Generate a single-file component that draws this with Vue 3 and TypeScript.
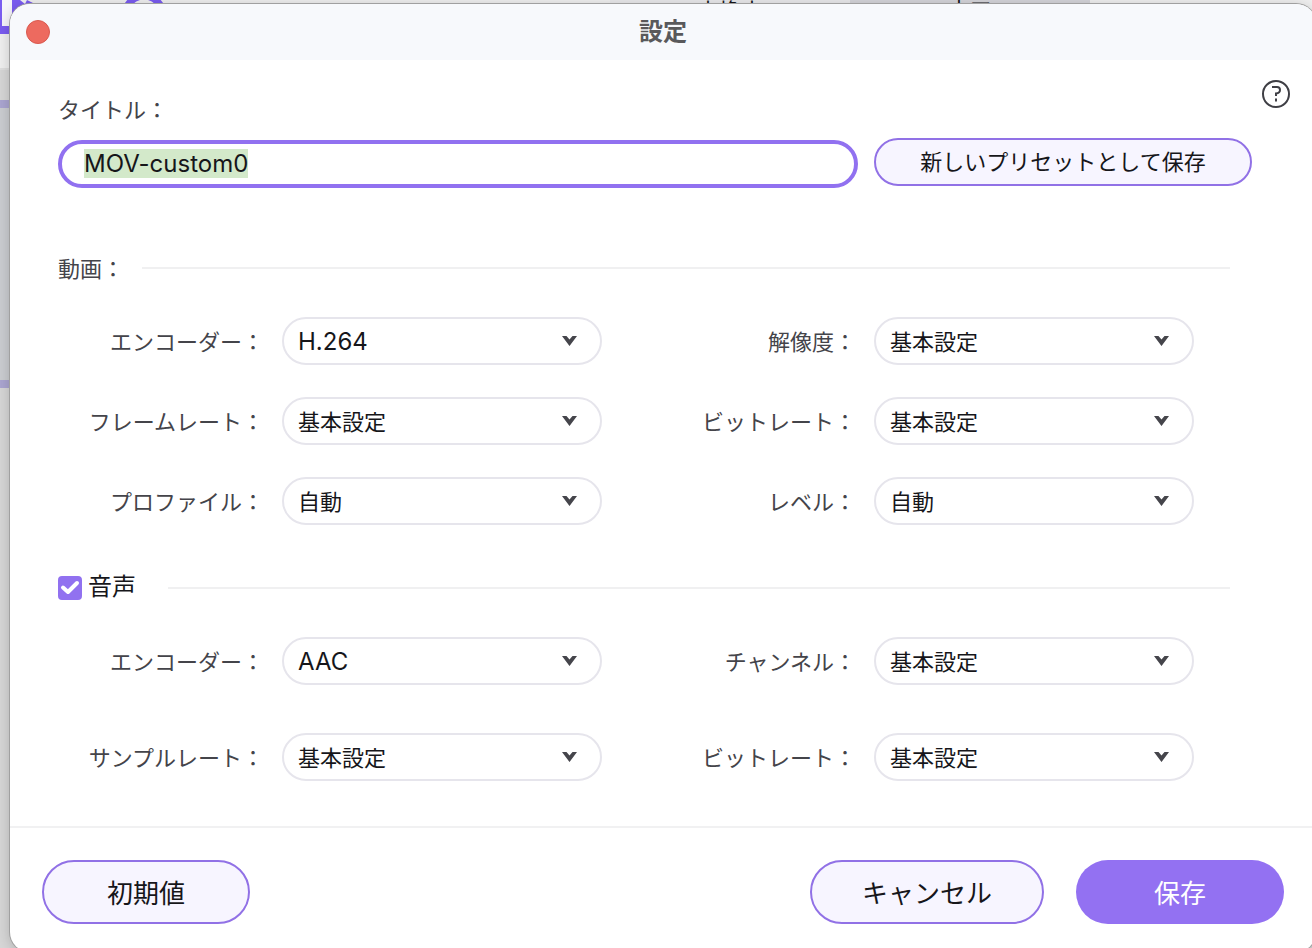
<script setup lang="ts">
import { onMounted, reactive, ref } from 'vue'

interface Field {
  id: string
  label: string
  options: string[]
  latin?: boolean
}

const presetName = ref('MOV-custom0')
const audioEnabled = ref(true)
const nameInput = ref<HTMLInputElement | null>(null)

const videoFields: Field[] = [
  { id: 'video-encoder', label: 'エンコーダー：', options: ['H.264'], latin: true },
  { id: 'video-resolution', label: '解像度：', options: ['基本設定'] },
  { id: 'video-framerate', label: 'フレームレート：', options: ['基本設定'] },
  { id: 'video-bitrate', label: 'ビットレート：', options: ['基本設定'] },
  { id: 'video-profile', label: 'プロファイル：', options: ['自動'] },
  { id: 'video-level', label: 'レベル：', options: ['自動'] },
]

const audioFields: Field[] = [
  { id: 'audio-encoder', label: 'エンコーダー：', options: ['AAC'], latin: true },
  { id: 'audio-channel', label: 'チャンネル：', options: ['基本設定'] },
  { id: 'audio-samplerate', label: 'サンプルレート：', options: ['基本設定'] },
  { id: 'audio-bitrate', label: 'ビットレート：', options: ['基本設定'] },
]

const values = reactive<Record<string, string>>({})
for (const field of [...videoFields, ...audioFields]) {
  values[field.id] = field.options[0]
}

onMounted(() => {
  nameInput.value?.focus()
  nameInput.value?.select()
})
</script>

<template>
  <div class="desktop">
    <div class="backdrop" aria-hidden="true">
      <svg class="brand" width="180" height="36" viewBox="0 0 180 36">
        <path d="M2 0H12V26H2Z" fill="#f6f5fa" />
        <path d="M0 0H2V26H12V34H0Z" fill="#7a5cf0" />
        <path d="M12 0H27L37 5V14H12Z" fill="#7a5cf0" />
        <path d="M20 0L25 4L27 0Z" fill="#efeff4" />
        <circle cx="144" cy="15" r="19" fill="none" stroke="#7a5cf0" stroke-width="7" />
      </svg>
      <div class="tabs">
        <span class="tab">変換中</span>
        <span class="tab selected">完了</span>
      </div>
      <div class="card"></div>
    </div>

    <main class="dialog">
      <header class="titlebar">
        <button class="close" type="button" aria-label="閉じる"></button>
        <h1>設定</h1>
      </header>

      <form class="content" @submit.prevent>
        <button class="help" type="button" aria-label="ヘルプ">
          <svg width="30" height="30" viewBox="0 0 30 30" fill="none" stroke="#3f3f45">
            <circle cx="15" cy="15" r="13" stroke-width="2" />
            <path d="M11 8H16Q19 8 19 11Q19 14 15 14.500V17M15 19.500V22.500" stroke-width="2" />
          </svg>
        </button>

        <label class="name-label" for="preset-name">タイトル：</label>
        <div class="name-row">
          <input id="preset-name" ref="nameInput" v-model="presetName" type="text" spellcheck="false" />
          <button class="outlined save-preset" type="button">新しいプリセットとして保存</button>
        </div>

        <section class="video">
          <div class="section-head">
            <h2>動画：</h2>
            <span class="rule"></span>
          </div>
          <div class="fields">
            <div v-for="field in videoFields" :key="field.id" class="field">
              <label :for="field.id">{{ field.label }}</label>
              <div class="picker">
                <select :id="field.id" v-model="values[field.id]" :class="{ latin: field.latin }">
                  <option v-for="option in field.options" :key="option">{{ option }}</option>
                </select>
                <svg width="15" height="10" viewBox="0 0 15 10">
                  <path d="M0 0H4.500L7.500 3.500L10.500 0H15L7.500 10Z" fill="#45454b" />
                </svg>
              </div>
            </div>
          </div>
        </section>

        <section class="audio">
          <div class="section-head">
            <label class="toggle" for="audio-enabled">
              <span class="tick">
                <input id="audio-enabled" v-model="audioEnabled" type="checkbox" />
                <svg v-if="audioEnabled" width="24" height="24" viewBox="0 0 24 24">
                  <path d="M5 11.500L10 16L19 7" fill="none" stroke="#fff" stroke-width="4" stroke-linecap="round" stroke-linejoin="round" />
                </svg>
              </span>
              <span class="toggle-text">音声</span>
            </label>
            <span class="rule"></span>
          </div>
          <div class="fields">
            <div v-for="field in audioFields" :key="field.id" class="field">
              <label :for="field.id">{{ field.label }}</label>
              <div class="picker">
                <select :id="field.id" v-model="values[field.id]" :class="{ latin: field.latin }">
                  <option v-for="option in field.options" :key="option">{{ option }}</option>
                </select>
                <svg width="15" height="10" viewBox="0 0 15 10">
                  <path d="M0 0H4.500L7.500 3.500L10.500 0H15L7.500 10Z" fill="#45454b" />
                </svg>
              </div>
            </div>
          </div>
        </section>
      </form>

      <footer class="actions">
        <button class="outlined reset" type="button">初期値</button>
        <button class="outlined cancel" type="button">キャンセル</button>
        <button class="primary" type="button">保存</button>
      </footer>
    </main>
  </div>
</template>

<style>
body {
  margin: 0;
}
</style>

<style scoped>
* {
  box-sizing: border-box;
}

.desktop {
  position: relative;
  min-height: 100vh;
  overflow: hidden;
  display: flex;
  padding: 4px 0 0 10px;
  background: #d6d6d6;
  color: #16161a;
  font-family: Inter, "Noto Sans CJK JP", sans-serif;
  font-size: 22px;
  line-height: 32px;
}

button,
input,
select {
  font: inherit;
  color: inherit;
  margin: 0;
}

.backdrop {
  position: absolute;
  inset: 0;
}

.backdrop::before {
  content: "";
  position: absolute;
  inset: 0 0 auto;
  height: 68px;
  background: #efefef;
  border-bottom: 2px solid #dedede;
}

.brand {
  position: absolute;
  left: 0;
  top: 0;
}

.tabs {
  position: absolute;
  left: 610px;
  top: -5px;
  display: flex;
}

.tab {
  width: 240px;
  height: 40px;
  text-align: center;
  background: #e8e8ea;
}

.tab.selected {
  background: #d4d4d9;
}

.card {
  position: absolute;
  left: 0;
  right: 0;
  top: 100px;
  height: 288px;
  border: solid #aaa5d0;
  border-width: 8px 0;
  background: #caccd0;
}

.dialog {
  position: relative;
  flex: 1;
  display: flex;
  flex-direction: column;
  margin-bottom: -4px;
  margin-right: -4px;
  border-radius: 20px;
  background: #fff;
  box-shadow: 0 0 0 1px #a0a0a0, 0 2px 14px rgba(0, 0, 0, 0.2);
  overflow: hidden;
}

.titlebar {
  position: relative;
  display: flex;
  align-items: center;
  justify-content: center;
  height: 56px;
  background: #f7f9fc;
}

.titlebar h1 {
  margin: 0;
  font-size: 24px;
  font-weight: 700;
  color: #59595b;
}

.close {
  position: absolute;
  left: 16px;
  top: 16px;
  width: 24px;
  height: 24px;
  padding: 0;
  border: 1px solid #d9594f;
  border-radius: 50%;
  background: #ed6a5f;
}

.content {
  position: relative;
  display: flex;
  flex-direction: column;
  padding: 34px 74px 45px 48px;
  color: #44444a;
}

.help {
  position: absolute;
  top: 19px;
  right: 25px;
  width: 30px;
  height: 30px;
  padding: 0;
  border: 0;
  background: none;
}

.help svg {
  display: block;
}

.name-label {
  align-self: flex-start;
}

.name-row {
  display: flex;
  align-items: flex-start;
  gap: 16px;
  margin-top: 12px;
  margin-right: -10px;
}

.name-row input {
  flex: 1;
  min-width: 0;
  height: 48px;
  margin-top: 2px;
  padding: 0 22px 2px;
  border: 4px solid #9171f0;
  border-radius: 24px;
  outline: none;
  background: #fff;
  color: #16161a;
  font-size: 24px;
}

.name-row input::selection {
  background: #d3e9ca;
  color: #16161a;
}

.outlined {
  border: 2px solid #9171e6;
  border-radius: 32px;
  background: #f7f5ff;
  color: #16161a;
}

.save-preset {
  width: 378px;
  height: 48px;
  padding: 0;
}

.section-head {
  display: flex;
  align-items: center;
  height: 32px;
}

.section-head h2 {
  margin: 0;
  padding-top: 2px;
  font-size: 22px;
  font-weight: 400;
}

.rule {
  flex: 1;
  height: 2px;
  margin: 0 12px 0 18px;
  background: #f0f0f1;
}

.video {
  margin-top: 64px;
}

.audio {
  margin-top: 47px;
}

.fields {
  display: grid;
  grid-template-columns: 1fr 1fr;
  row-gap: 32px;
  margin-top: 33px;
}

.audio .fields {
  row-gap: 48px;
}

.field {
  display: flex;
  align-items: center;
  gap: 18px;
  padding-right: 48px;
}

.field label {
  width: 206px;
  padding-top: 2px;
  text-align: right;
}

.picker {
  position: relative;
  flex: 1;
}

.picker select {
  display: block;
  width: 100%;
  height: 48px;
  padding: 2px 48px 0 14px;
  appearance: none;
  border: 2px solid #e6e5ec;
  border-radius: 24px;
  background: #fff;
  color: #16161a;
}

.picker select.latin {
  font-size: 24px;
}

.picker svg {
  position: absolute;
  right: 25px;
  top: 19px;
  pointer-events: none;
}

.toggle {
  display: flex;
  align-items: center;
  gap: 6px;
  color: #16161a;
  font-size: 24px;
}

.toggle-text {
  padding-bottom: 2px;
}

.tick {
  position: relative;
  width: 24px;
  height: 24px;
}

.tick input {
  display: block;
  width: 24px;
  height: 24px;
  appearance: none;
  border-radius: 4px;
  border: 2px solid #9171f0;
}

.tick input:checked {
  background: #9171f0;
}

.tick svg {
  position: absolute;
  left: 0;
  top: 0;
  pointer-events: none;
}

.audio .rule {
  margin-left: 32px;
}

.actions {
  display: flex;
  align-items: center;
  gap: 32px;
  flex: 1;
  padding: 32px 32px 28px;
  border-top: 2px solid #f1f1f2;
  font-size: 26px;
}

.actions button {
  width: 208px;
  height: 64px;
  padding: 3px 0 0;
}

.actions .reset {
  margin-right: auto;
}

.actions .cancel {
  width: 234px;
}

.actions .primary {
  border: 0;
  border-radius: 32px;
  background: #9371f2;
  color: #fff;
}
</style>
